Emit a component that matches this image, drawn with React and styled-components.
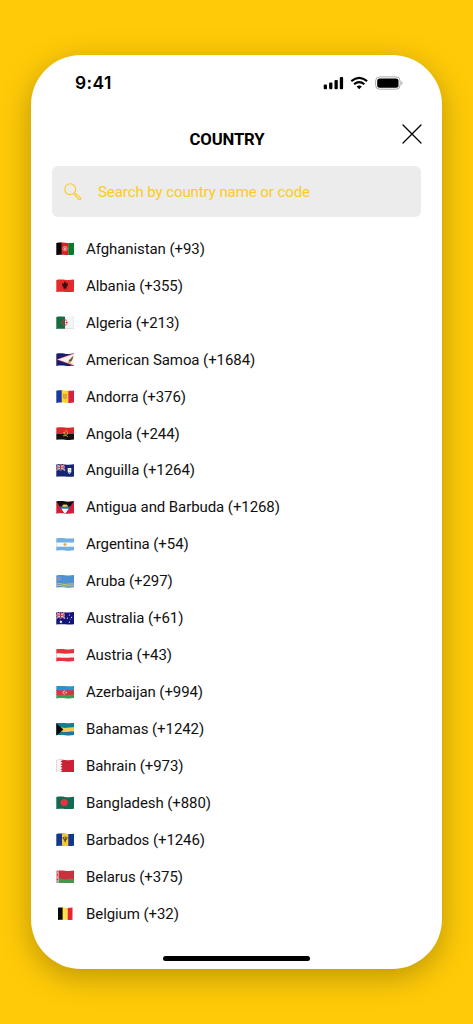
import React from "react";
import styled, {createGlobalStyle} from "styled-components";

const GlobalStyle = createGlobalStyle`
  * {
    box-sizing: border-box;
  }
  body {
    margin: 0;
    background: #ffcb08;
    font-family: Roboto, "Liberation Sans", sans-serif;
  }
`

const Page = styled.main`
  height: 1024px;
  padding: 55px 31px;
  overflow: hidden;
  background: #ffcb08;
`

const Phone = styled.div`
  display: flex;
  flex-direction: column;
  width: 411px;
  height: 914px;
  border-radius: 50px;
  background: #fff;
  box-shadow: 0 8px 32px rgba(0, 0, 0, .27);
`

const StatusBar = styled.div`
  display: flex;
  align-items: center;
  justify-content: space-between;
  height: 55px;
  padding: 0 39px 0 44px;
`

const Time = styled.span`
  font: 600 17.4px/20px Inter, sans-serif;
  letter-spacing: .4px;
`

const StatusIcons = styled.svg`
  display: block;
  width: 80px;
  height: 14px;
`

const Header = styled.header`
  display: grid;
  grid-template-columns: 40px 1fr 40px;
  height: 56px;
`

const Title = styled.h1`
  grid-column: 2;
  margin: 19px 0 0;
  padding-right: 19px;
  font-size: 16.7px;
  font-weight: 700;
  line-height: 22px;
  letter-spacing: -.15px;
  text-align: center;
`

const CloseButton = styled.button`
  width: 20px;
  height: 20px;
  margin: 14px 0 0;
  padding: 0;
  border: 0;
  background: none;

  svg {
    display: block;
  }
`

const SearchBar = styled.label`
  display: flex;
  align-items: center;
  gap: 16px;
  height: 51px;
  margin: 0 21px;
  padding: 0 12px;
  border-radius: 6px;
  background: #ececec;
`

const SearchInput = styled.input`
  flex: 1;
  min-width: 0;
  padding: 0;
  border: 0;
  outline: none;
  background: none;
  color: #ffcb08;
  font: 400 15px/20px Roboto, sans-serif;
  letter-spacing: -.08px;

  &::placeholder {
    color: #fbcb20;
    opacity: 1;
  }
`

const CountryList = styled.ul`
  flex: 1;
  margin: 0;
  padding: 13.4px 25px 0;
  list-style: none;
`

const CountryRow = styled.li`
  display: flex;
  align-items: center;
  gap: 12px;
  height: 36.94px;
  color: #111;
  font-size: 15px;
  line-height: 20px;
  letter-spacing: -.08px;
  white-space: nowrap;
`

const Flag = styled.svg`
  flex: none;
  width: 18px;
  height: 13px;
  clip-path: ${p => p.$narrow
    ? "path('M2 .6 C4 0 6 .1 9 .5 S14 .7 16.5 .3 V12.4 C14 12.9 12 12.8 9 12.6 S4 12.4 2 12.8 Z')"
    : "path('M.3 .7 C3 0 6 .1 9 .5 S15 .8 18 .3 V12.4 C15 13 12 12.9 9 12.6 S3 12.4 .3 12.8 Z')"};
`

const HomeIndicator = styled.div`
  width: 147px;
  height: 5px;
  margin: 0 auto 8.5px;
  border-radius: 3px;
  background: #000;
`

const UnionJack = () => <g>
    <path fill='#1a237b' d='M0 0h9v6.5H0z'/>
    <path stroke='#fff' strokeWidth='1.2' d='M0 0l9 6.5M9 0L0 6.5'/>
    <path stroke='#d32239' strokeWidth='.6' d='M0 0l9 6.5M9 0L0 6.5'/>
    <path stroke='#fff' strokeWidth='1.7' d='M4.5 0v6.5M0 3.3h9'/>
    <path stroke='#d32239' strokeWidth='1.1' d='M4.5 0v6.5M0 3.3h9'/>
</g>

const countries = [
    {
        name: 'Afghanistan', code: '93',
        flag: <>
            <path fill='#050505' d='M0 0h6v13H0z'/>
            <path fill='#d52323' d='M5.5 0h7v13h-7z'/>
            <path fill='#087a2b' d='M12.3 0H18v13h-5.7z'/>
            <circle cx='9' cy='6.6' r='2.3' fill='none' stroke='#f1a39c' strokeWidth='.8'/>
            <path fill='#f1b2aa' d='M7.8 5.6h2.4v2.2H7.8z'/>
        </>,
    },
    {
        name: 'Albania', code: '355',
        flag: <>
            <path fill='#e32b2b' d='M0 0h18v13H0z'/>
            <path fill='#351010' d='M8 2.8h.9v1.4h.3V2.8h.9v2l2-1-.6 2.2.4 1.2-1.5.4.5 2-1.1-.4-.8 1.5-.8-1.5-1.1.4.5-2-1.5-.4.4-1.2L5.9 3.8l2.1 1z'/>
        </>,
    },
    {
        name: 'Algeria', code: '213',
        flag: <>
            <path fill='#f5f5f5' d='M0 0h18v13H0z'/>
            <path fill='#176c40' d='M0 0h9v13H0z'/>
            <path fill='none' stroke='#dc3040' strokeWidth='1' d='M10.6 4.4a2.8 2.8 0 1 0 0 4.2'/>
            <path fill='#dc3040' d='M9 6.5l1.2-.4.1-1 .7.9 1.1-.3-.6.9.6 1-1.1-.4-.7.8-.1-1.1z'/>
            <path fill='none' stroke='#d9d9d9' strokeWidth='.8' d='M9 .5h9v12H9'/>
        </>,
    },
    {
        name: 'American Samoa', code: '1684',
        flag: <>
            <path fill='#171e70' d='M0 0h18v13H0z'/>
            <path fill='#cd2f40' d='M18 0L0 6.5 18 13z'/>
            <path fill='#f5f3ef' d='M18 .8L1.5 6.5 18 12.2z'/>
            <path fill='#74512d' d='M17.5 3l-1.3 4-1.8 2.6-2.8-.2 1.2-1 .2-1.7 1.6-.8 1.2-2z'/>
            <path fill='#dfb656' d='M11.8 8.2h3v.8h-3zM13.5 10h1.8v.8h-1.8z'/>
        </>,
    },
    {
        name: 'Andorra', code: '376',
        flag: <>
            <path fill='#1639a3' d='M0 0h6v13H0z'/>
            <path fill='#fdd32e' d='M5.7 0h6.7v13H5.7z'/>
            <path fill='#d52340' d='M12.3 0H18v13h-5.7z'/>
            <path fill='#d7903e' d='M7 4h4v3.8L9 9.5 7 7.8z'/>
            <path stroke='#f5c44d' strokeWidth='.6' d='M9 4v5M7 6.3h4'/>
        </>,
    },
    {
        name: 'Angola', code: '244',
        flag: <>
            <path fill='#dc282b' d='M0 0h18v6.5H0z'/>
            <path fill='#151110' d='M0 6.5h18V13H0z'/>
            <path fill='none' stroke='#dfb632' strokeWidth='.8' d='M9.2 3.4c3 .4 3 4.1.5 5.1L7 8.8M7.7 6.4l4 3.3'/>
            <path fill='#dfb632' d='M8.2 4.3l.4.9h1l-.8.6.2.9-.8-.5-.8.5.2-.9-.8-.6h1z'/>
        </>,
    },
    {
        name: 'Anguilla', code: '1264',
        flag: <>
            <path fill='#172573' d='M0 0h18v13H0z'/>
            <UnionJack/>
            <path fill='#f4f1e4' d='M11.7 4h3.6v4.1c-.5 1.2-1.2 1.7-1.8 2-.6-.3-1.3-.8-1.8-2z'/>
            <path fill='#55b6c8' d='M11.9 8h3.2l-1.6 1.7z'/>
            <path stroke='#eaa84c' strokeWidth='.9' d='M12.8 5.2l1.5 1.6'/>
        </>,
    },
    {
        name: 'Antigua and Barbuda', code: '1268',
        flag: <>
            <path fill='#d22039' d='M0 0h18v13H0z'/>
            <path fill='#101010' d='M0 0h18L9 13z'/>
            <path fill='#2179c3' d='M3.7 5.4h10.6L9 13z'/>
            <path fill='#fff' d='M5.3 7.8h7.4L9 13z'/>
            <path fill='#fdd12f' d='M5.7 5.7l1-.5-.5-1.1 1.1.2.4-1.2.8.9.5-1.2.5 1.2.8-.9.4 1.2 1.1-.2-.5 1.1 1 .5z'/>
        </>,
    },
    {
        name: 'Argentina', code: '54',
        flag: <>
            <path fill='#71b0e0' d='M0 0h18v13H0z'/>
            <path fill='#f7f8f8' d='M0 4.4h18v4.3H0z'/>
            <circle cx='9' cy='6.5' r='1.2' fill='#e7aa3e'/>
            <path stroke='#e7aa3e' strokeWidth='.4' d='M7.2 6.5h3.6M9 4.8v3.4M7.8 5.3l2.4 2.4M10.2 5.3L7.8 7.7'/>
        </>,
    },
    {
        name: 'Aruba', code: '297',
        flag: <>
            <path fill='#4e90d3' d='M0 0h18v13H0z'/>
            <path stroke='#e7d643' strokeWidth='.85' d='M0 9c4-1 6 .5 9 .4s6-.8 9-.5M0 10.8c4-1 6 .5 9 .4s6-.8 9-.5' fill='none'/>
            <path fill='#d83b51' stroke='#eee' strokeWidth='.3' d='M3 1.7l.5 1.2 1.4.6-1.4.6L3 5.3l-.5-1.2-1.4-.6 1.4-.6z'/>
        </>,
    },
    {
        name: 'Australia', code: '61',
        flag: <>
            <path fill='#14157b' d='M0 0h18v13H0z'/>
            <UnionJack/>
            <g fill='#fff'>
                <path d='M4.8 8l.4 1 1-.2-.5.9.8.6-1 .2-.1 1-.7-.7-.9.4.3-1-.9-.5 1-.3z'/>
                <circle cx='13.4' cy='3' r='.6'/>
                <circle cx='11.4' cy='6.1' r='.6'/>
                <circle cx='15.6' cy='5.3' r='.6'/>
                <circle cx='14.3' cy='7.1' r='.4'/>
                <circle cx='13.4' cy='10.1' r='.7'/>
            </g>
        </>,
    },
    {
        name: 'Austria', code: '43',
        flag: <>
            <path fill='#e3343c' d='M0 0h18v13H0z'/>
            <path fill='#f6f5f5' d='M0 4.5c4-.6 6 .2 9 .2s6-.6 9-.4v4.2c-4-.2-6 .4-9 .3s-6-.6-9-.1z'/>
        </>,
    },
    {
        name: 'Azerbaijan', code: '994',
        flag: <>
            <path fill='#2497c9' d='M0 0h18v5H0z'/>
            <path fill='#e72e3c' d='M0 4.3h18v5H0z'/>
            <path fill='#3c9e55' d='M0 8.8h18V13H0z'/>
            <path fill='none' stroke='#fff' strokeWidth='.7' d='M9.3 5.3a1.5 1.5 0 1 0 0 2.4'/>
            <circle cx='10.2' cy='6.5' r='.7' fill='#fff'/>
        </>,
    },
    {
        name: 'Bahamas', code: '1242',
        flag: <>
            <path fill='#167c91' d='M0 0h18v13H0z'/>
            <path fill='#f8cb4c' d='M0 4.6c4-.8 6 .3 9 .3s6-.8 9-.6v4.2c-4-.4-6 .5-9 .4s-6-.8-9-.2z'/>
            <path fill='#080808' d='M0 0l7.4 6.5L0 13z'/>
        </>,
    },
    {
        name: 'Bahrain', code: '973',
        flag: <>
            <path fill='#c92234' d='M0 0h18v13H0z'/>
            <path fill='#f5f4f4' d='M0 0h4.5l2 1.3-2 1.3 2 1.3-2 1.3 2 1.3-2 1.3 2 1.3-2 1.3 2 1.3-2 1.3H0z'/>
            <path fill='none' stroke='#e4e4e4' strokeWidth='.6' d='M4.5 .6H.5v11.8h4'/>
        </>,
    },
    {
        name: 'Bangladesh', code: '880',
        flag: <>
            <path fill='#126b50' d='M0 0h18v13H0z'/>
            <circle cx='8.2' cy='6.5' r='3.5' fill='#e9323f'/>
        </>,
    },
    {
        name: 'Barbados', code: '1246',
        flag: <>
            <path fill='#12378d' d='M0 0h18v13H0z'/>
            <path fill='#f9c638' d='M6 0h6.3v13H6z'/>
            <path fill='none' stroke='#171717' strokeWidth='.8' d='M7.2 4c0 2.3.8 3 1.9 3s1.9-.7 1.9-3M9.1 3.4v5.8'/>
        </>,
    },
    {
        name: 'Belarus', code: '375',
        flag: <>
            <path fill='#ca303e' d='M0 0h18v13H0z'/>
            <path fill='#42984d' d='M0 9c4-1 6 .3 9 .2s6-.8 9-.5V13H0z'/>
            <path fill='#eee' d='M0 0h2.5v13H0z'/>
            <path stroke='#ca303e' strokeWidth='1.5' strokeDasharray='.8 .5' d='M1.3 0v13'/>
        </>,
    },
    {
        name: 'Belgium', code: '32', narrow: true,
        flag: <>
            <path fill='#080808' d='M0 0h7v13H0z'/>
            <path fill='#fee047' d='M6.6 0h5.2v13H6.6z'/>
            <path fill='#e72538' d='M11.7 0H18v13h-6.3z'/>
        </>,
    },
]

export default function App() {
    return <>
        <GlobalStyle/>
        <Page>
            <Phone>
                <StatusBar>
                    <Time>9:41</Time>
                    <StatusIcons viewBox='0 0 80 14'>
                        <rect x='.7' y='8.6' width='3.3' height='4.7' rx='1'/>
                        <rect x='6.1' y='6.6' width='3.3' height='6.7' rx='1'/>
                        <rect x='11.5' y='4' width='3.3' height='9.3' rx='1'/>
                        <rect x='16.8' y='1' width='3.3' height='12.3' rx='1'/>
                        <g fill='none' stroke='#000' strokeWidth='2.1'>
                            <path d='M28.3 5.1q7.9-6.5 15.8 0'/>
                            <path d='M31 8.3q5.2-4.3 10.4 0'/>
                        </g>
                        <path d='M33.6 10.5q2.6-1.9 5.2 0L36.2 13.3z'/>
                        <rect x='52.6' y='.9' width='24.5' height='12.3' rx='4' fill='none' stroke='#aaa' strokeWidth='1'/>
                        <rect x='54.2' y='2.4' width='21.3' height='9.3' rx='2.5'/>
                        <path fill='#aaa' d='M78.3 5v4.2c1.7-.8 1.7-3.4 0-4.2z'/>
                    </StatusIcons>
                </StatusBar>
                <Header>
                    <Title>COUNTRY</Title>
                    <CloseButton aria-label='Close'>
                        <svg width='20' height='20' viewBox='0 0 20 20' fill='none' stroke='#000' strokeWidth='1.3' strokeLinecap='round'>
                            <path d='M1 1l18 18M19 1L1 19'/>
                        </svg>
                    </CloseButton>
                </Header>
                <SearchBar>
                    <svg width='18' height='18' viewBox='0 0 18 18' fill='none' stroke='#fbcb20' strokeWidth='1.1'>
                        <circle cx='6.2' cy='6.2' r='5.4'/>
                        <path d='M10 10l1.5 1.5M10.9 12.3l1.4-1.4 4.5 4.4q.2 1.2-1.5 1.5z'/>
                    </svg>
                    <SearchInput placeholder='Search by country name or code'/>
                </SearchBar>
                <CountryList>
                    {
                        countries.map(country =>
                            <CountryRow key={country.name}>
                                <Flag viewBox='0 0 18 13' fill='none' $narrow={country.narrow}>{country.flag}</Flag>
                                {`${country.name} (+${country.code})`}
                            </CountryRow>
                        )
                    }
                </CountryList>
                <HomeIndicator/>
            </Phone>
        </Page>
    </>
}
